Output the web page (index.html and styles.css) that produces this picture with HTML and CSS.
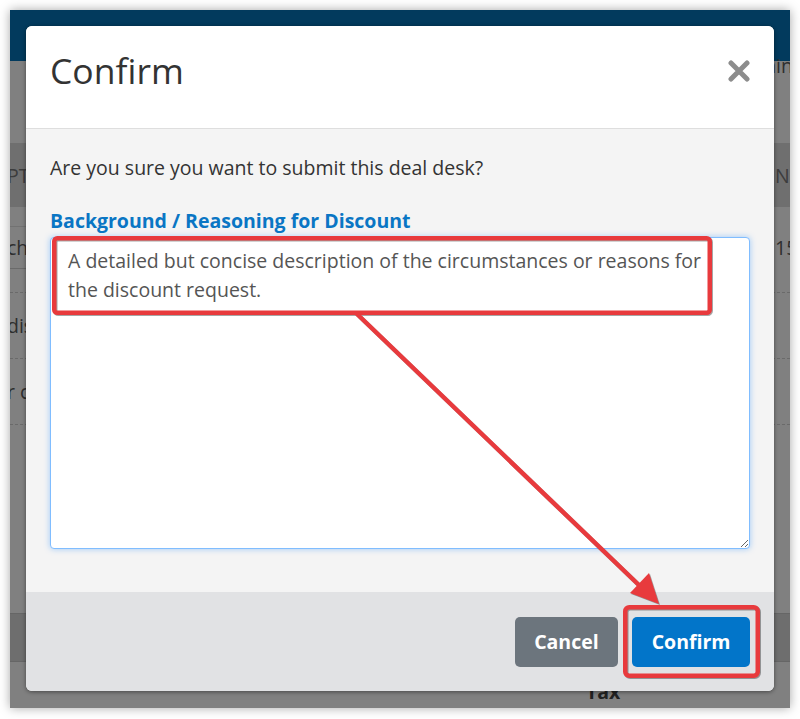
FILE: index.html
```html
<!DOCTYPE html>
<html lang="en">
<head>
<meta charset="utf-8">
<title>Confirm</title>
<link rel="stylesheet" href="styles.css">
</head>
<body>
<div class="screen">
  <div class="topbar"></div>
  <div class="userbar">Admin</div>
  <div class="thead">
    <span class="cl">PT</span>
    <span class="cr">NI</span>
  </div>
  <div class="gap1"></div>
  <div class="row1">
    <span class="cl lined">ch</span>
    <span class="cr">15</span>
  </div>
  <div class="gap2"></div>
  <div class="drow"><span class="cl">dis</span></div>
  <div class="drow"><span class="cl">r c</span></div>
  <div class="spacer"></div>
  <div class="band"></div>
  <div class="taxrow">Tax</div>

  <div class="modal">
    <div class="modal-header">
      <h1 class="modal-title">Confirm</h1>
      <svg class="close" width="22" height="22" viewBox="0 0 22 22" aria-label="Close">
        <path d="M3 3 L19 19 M19 3 L3 19" stroke="#8c8c8c" stroke-width="5" stroke-linecap="round" fill="none"/>
      </svg>
    </div>
    <div class="modal-body">
      <p class="question">Are you sure you want to submit this deal desk?</p>
      <label class="field-label" for="reason">Background / Reasoning for Discount</label>
      <textarea id="reason" class="field">A detailed but concise description of the circumstances or reasons for the discount request.</textarea>
    </div>
    <div class="modal-footer">
      <button class="btn btn-cancel">Cancel</button>
      <button class="btn btn-confirm">Confirm</button>
    </div>
  </div>
</div>

<svg class="annot" width="800" height="719" viewBox="0 0 800 719">
  <rect x="54.25" y="238.25" width="655.5" height="74.5" rx="3" fill="none" stroke="#e83a3d" stroke-width="4.5"/>
  <rect x="625.25" y="607.25" width="132.5" height="68.5" rx="4" fill="none" stroke="#e83a3d" stroke-width="4.5"/>
  <line x1="356" y1="313" x2="642" y2="588" stroke="#e83a3d" stroke-width="4.5"/>
  <polygon points="659,604 630,593 649,573" fill="#e83a3d"/>
</svg>
</body>
</html>
```
FILE: styles.css
```css
* { box-sizing: border-box; }

html, body {
  margin: 0;
  padding: 0;
  background: #ffffff;
}

body {
  position: relative;
  width: 800px;
  height: 719px;
  overflow: hidden;
  font-family: "Open Sans", "DejaVu Sans", sans-serif;
}

.screen {
  position: relative;
  margin: 10px;
  width: 780px;
  height: 698px;
  overflow: hidden;
  background: #808080;
  box-shadow: 0 0 10px rgba(0, 0, 0, 0.35);
  font-size: 19.5px;
  color: #2e2e2e;
}

.topbar {
  height: 51px;
  background: #023a5d;
}

.userbar {
  height: 82px;
  line-height: 10px;
  margin-right: -3px;
  text-align: right;
  white-space: nowrap;
}

.thead {
  height: 64px;
  background: #6f6f6f;
  display: flex;
  align-items: center;
  color: #3c3c3c;
}

.cl {
  width: 20px;
  margin-left: -3px;
  white-space: nowrap;
  overflow: visible;
}

.cr {
  margin-left: auto;
  width: 15px;
  white-space: nowrap;
  overflow: visible;
}

.gap1 { height: 19px; }

.row1 {
  height: 43px;
  display: flex;
  align-items: stretch;
}

.row1 .cl,
.row1 .cr {
  display: flex;
  align-items: center;
}

.lined {
  border-top: 1px solid #727272;
  border-bottom: 1px solid #6a6a6a;
}

.gap2 { height: 23px; }

.drow {
  height: 66px;
  border-top: 1px dashed #6a6a6a;
  display: flex;
  align-items: center;
}

.spacer {
  height: 189px;
  border-top: 1px dashed #6a6a6a;
}

.band {
  height: 49px;
  background: #6e6e6e;
  border-top: 1px solid #666;
  border-bottom: 1px solid #666;
}

.taxrow {
  margin-top: 15px;
  padding-left: 576px;
  font-weight: 700;
  line-height: 29px;
  color: #222;
}

.modal {
  position: absolute;
  left: 16px;
  top: 16px;
  width: 748px;
  height: 665px;
  border-radius: 6px;
  overflow: hidden;
  display: flex;
  flex-direction: column;
  box-shadow: 0 1px 4px rgba(0, 0, 0, 0.45);
  background: #f4f4f4;
}

.modal-header {
  height: 103px;
  flex: none;
  background: #ffffff;
  border-bottom: 1px solid #dedede;
  display: flex;
  align-items: center;
  justify-content: space-between;
  padding: 0 24px 12px;
}

.modal-title {
  margin: 0;
  font-size: 35.5px;
  font-weight: 400;
  line-height: 1;
  color: #333;
}

.close { display: block; }

.modal-body {
  flex: 1;
  padding: 24px 24px 0;
  background: #f4f4f4;
}

.question {
  margin: 0 0 24px;
  font-size: 19.5px;
  line-height: 1.5;
  color: #333;
}

.field-label {
  display: block;
  margin: 0 0 1px;
  font-size: 19.5px;
  line-height: 1.5;
  font-weight: 700;
  color: #0a76c4;
}

.field {
  display: block;
  width: 700px;
  height: 312px;
  margin: 0;
  padding: 8px 17px;
  border: 1px solid #80bdff;
  border-radius: 4px;
  box-shadow: 0 0 6px rgba(0, 123, 255, 0.35);
  background: #ffffff;
  font-family: "Open Sans", "DejaVu Sans", sans-serif;
  font-size: 19.5px;
  line-height: 1.5;
  color: #555;
  outline: none;
  resize: both;
}

.modal-footer {
  height: 99px;
  flex: none;
  background: #e1e2e4;
  display: flex;
  justify-content: flex-end;
  align-items: flex-start;
  gap: 14px;
  padding: 25px 24px 0;
}

.btn {
  height: 50px;
  padding: 0 19.5px;
  border: none;
  border-radius: 5px;
  font-family: "Open Sans", "DejaVu Sans", sans-serif;
  font-size: 19.5px;
  font-weight: 700;
  color: #ffffff;
  line-height: 50px;
}

.btn-cancel { background: #6c757d; }
.btn-confirm { background: #0275c9; }

.annot {
  position: absolute;
  left: 0;
  top: 0;
  pointer-events: none;
  filter: drop-shadow(1px 1px 0.6px rgba(0, 0, 0, 0.35));
}
```
